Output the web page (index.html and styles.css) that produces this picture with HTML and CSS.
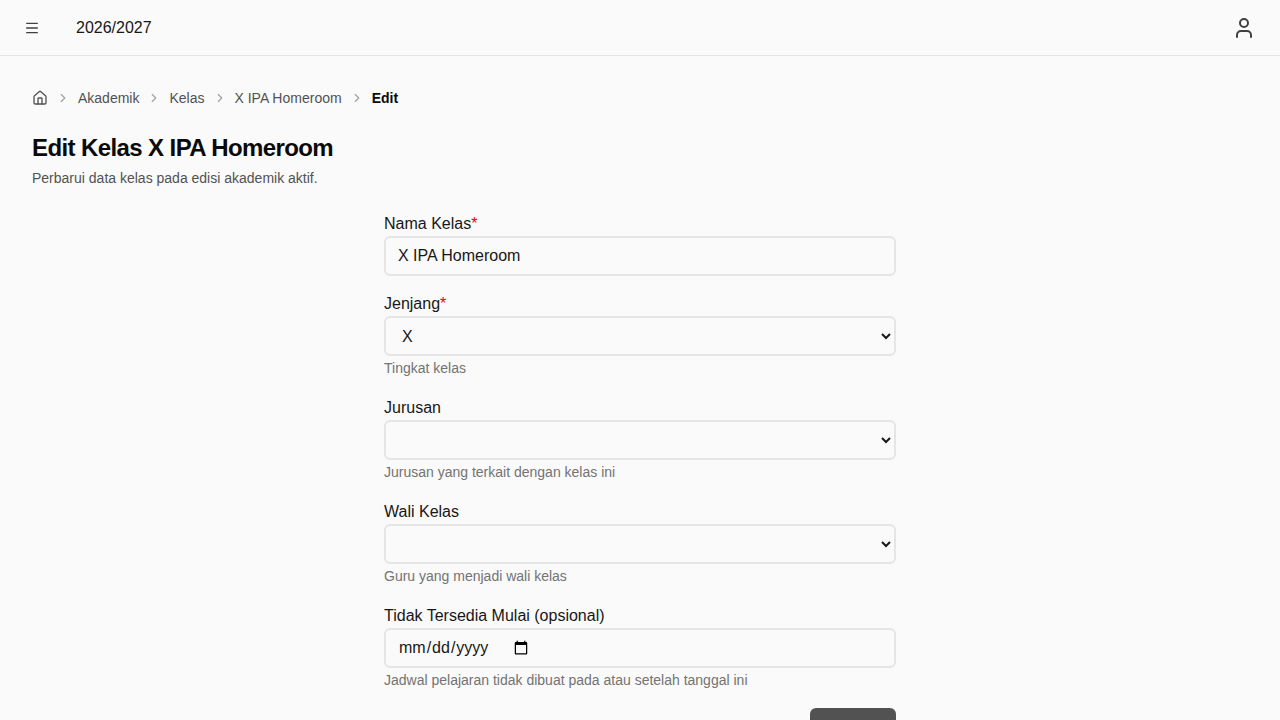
FILE: index.html
```html
<!DOCTYPE html>
<html lang="id">
<head>
    <meta charset="UTF-8">
    <meta name="viewport" content="width=device-width, initial-scale=1.0">
    <title>Edit Kelas X IPA Homeroom</title>
    <link rel="stylesheet" href="styles.css">
</head>
<body>

<svg class="sprite" aria-hidden="true">
    <symbol id="chevron" viewBox="0 0 24 24">
        <path d="m9 18 6-6-6-6"/>
    </symbol>
</svg>

<header class="topbar">
    <div class="topbar-left">
        <button type="button" class="icon-button" aria-label="Menu">
            <svg class="icon" viewBox="0 0 24 24"><path d="M4 5h16M4 12h16M4 19h16"/></svg>
        </button>
        <span class="period">2026/2027</span>
    </div>
    <button type="button" class="icon-button" aria-label="Akun">
        <svg class="icon icon-user" viewBox="0 0 24 24">
            <circle cx="12" cy="7" r="4"/>
            <path d="M19 21v-2a4 4 0 0 0-4-4H9a4 4 0 0 0-4 4v2"/>
        </svg>
    </button>
</header>

<main class="content">
    <nav class="breadcrumb" aria-label="Breadcrumb">
        <a href="#" aria-label="Beranda">
            <svg class="icon" viewBox="0 0 24 24">
                <path d="M15 21v-8a1 1 0 0 0-1-1h-4a1 1 0 0 0-1 1v8"/>
                <path d="M3 10a2 2 0 0 1 .709-1.528l7-5.999a2 2 0 0 1 2.582 0l7 5.999A2 2 0 0 1 21 10v9a2 2 0 0 1-2 2H5a2 2 0 0 1-2-2z"/>
            </svg>
        </a>
        <svg class="icon separator"><use href="#chevron"/></svg>
        <a href="#">Akademik</a>
        <svg class="icon separator"><use href="#chevron"/></svg>
        <a href="#">Kelas</a>
        <svg class="icon separator"><use href="#chevron"/></svg>
        <a href="#">X IPA Homeroom</a>
        <svg class="icon separator"><use href="#chevron"/></svg>
        <span class="current" aria-current="page">Edit</span>
    </nav>

    <div class="page-heading">
        <h1>Edit Kelas X IPA Homeroom</h1>
        <p>Perbarui data kelas pada edisi akademik aktif.</p>
    </div>

    <form class="form">
        <div class="field">
            <label for="nama">Nama Kelas<span class="required">*</span></label>
            <input class="control" type="text" id="nama" value="X IPA Homeroom" required>
        </div>
        <div class="field">
            <label for="jenjang">Jenjang<span class="required">*</span></label>
            <select class="control" id="jenjang" required>
                <option>X</option>
            </select>
            <p class="hint">Tingkat kelas</p>
        </div>
        <div class="field">
            <label for="jurusan">Jurusan</label>
            <select class="control" id="jurusan">
                <option></option>
            </select>
            <p class="hint">Jurusan yang terkait dengan kelas ini</p>
        </div>
        <div class="field">
            <label for="wali">Wali Kelas</label>
            <select class="control" id="wali">
                <option></option>
            </select>
            <p class="hint">Guru yang menjadi wali kelas</p>
        </div>
        <div class="field">
            <label for="mulai">Tidak Tersedia Mulai (opsional)</label>
            <input class="control control-date" type="date" id="mulai">
            <p class="hint">Jadwal pelajaran tidak dibuat pada atau setelah tanggal ini</p>
        </div>
        <button type="submit" class="submit-button">Simpan</button>
    </form>
</main>

</body>
</html>
```

FILE: styles.css
```css
* {
    box-sizing: border-box;
}
body {
    margin: 0;
    font-family: "Liberation Sans", Arial, sans-serif;
    font-size: 16px;
    line-height: 24px;
    color: #171717;
    background: #fafafa;
}
h1, p {
    margin: 0;
}
.sprite {
    display: none;
}
.icon {
    width: 16px;
    height: 16px;
    display: block;
    fill: none;
    stroke: currentColor;
    stroke-width: 2;
    stroke-linecap: round;
    stroke-linejoin: round;
}
.topbar {
    display: flex;
    align-items: center;
    justify-content: space-between;
    height: 56px;
    padding: 0 16px;
    border-bottom: 1px solid #e5e5e5;
}
.topbar-left {
    display: flex;
    align-items: center;
    gap: 28px;
}
.icon-button {
    display: flex;
    align-items: center;
    justify-content: center;
    min-width: 32px;
    height: 40px;
    padding: 0 8px;
    border: none;
    background: none;
    color: #404040;
    cursor: pointer;
}
.icon-user {
    width: 24px;
    height: 24px;
}
.content {
    padding: 32px;
}
/* Breadcrumb */
.breadcrumb {
    display: flex;
    align-items: center;
    gap: 8px;
    font-size: 14px;
    line-height: 20px;
}
.breadcrumb a {
    color: #525252;
    text-decoration: none;
}
.breadcrumb a:hover {
    color: #171717;
}
.breadcrumb .separator {
    width: 14px;
    height: 14px;
    color: #a1a1a1;
}
.breadcrumb .current {
    font-weight: bold;
    color: #0a0a0a;
}
.page-heading {
    margin: 24px 0;
}
.page-heading h1 {
    font-size: 24px;
    line-height: 32px;
    letter-spacing: -0.025em;
    color: #0a0a0a;
}
.page-heading p {
    margin-top: 4px;
    font-size: 14px;
    line-height: 20px;
    color: #525252;
}
/* Form */
.form {
    display: flex;
    flex-direction: column;
    gap: 16px;
    max-width: 512px;
    margin: 0 auto;
}
.field {
    display: flex;
    flex-direction: column;
}
.required {
    color: #e7000b;
}
.control {
    width: 100%;
    height: 40px;
    padding: 0 12px;
    border: 2px solid #e5e5e5;
    border-radius: 6px;
    background: #fafafa;
    font: inherit;
    color: inherit;
}
.control:focus {
    border-color: #a1a1a1;
    outline: none;
}
.control-date {
    display: flex;
    align-items: center;
}
.control-date::-webkit-datetime-edit {
    flex: none;
}
.hint {
    font-size: 14px;
    color: #737373;
}
.submit-button {
    align-self: flex-end;
    height: 40px;
    padding: 0 16px;
    border: none;
    border-radius: 6px;
    background: #525252;
    color: #fafafa;
    font: inherit;
    cursor: pointer;
}
.submit-button:hover {
    background: #404040;
}
```
